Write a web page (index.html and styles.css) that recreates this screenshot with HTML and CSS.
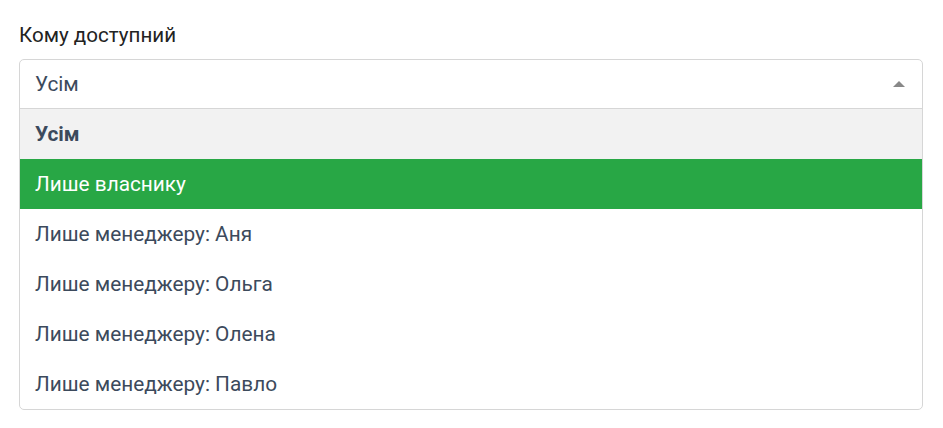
FILE: index.html
```html
<!DOCTYPE html>
<html lang="uk">
<head>
<meta charset="utf-8">
<link rel="stylesheet" href="styles.css">
</head>
<body>
<div class="field">
  <label class="label">Кому доступний</label>
  <div class="select">
    <div class="select-head">
      <span class="value">Усім</span>
      <span class="arrow"></span>
    </div>
    <ul class="options">
      <li class="option option-selected">Усім</li>
      <li class="option option-active">Лише власнику</li>
      <li class="option">Лише менеджеру: Аня</li>
      <li class="option">Лише менеджеру: Ольга</li>
      <li class="option">Лише менеджеру: Олена</li>
      <li class="option">Лише менеджеру: Павло</li>
    </ul>
  </div>
</div>
</body>
</html>
```
FILE: styles.css
```css
* { box-sizing: border-box; }
html, body { margin: 0; padding: 0; background: #fff; }
body {
  font-family: Roboto, "Noto Sans", Arial, sans-serif;
  font-size: 20.8px;
  color: #3c4a5c;
}
.field {
  padding: 22px 20px 0 19px;
}
.label {
  display: block;
  color: #222;
  font-size: 20.6px;
  line-height: 26px;
  margin-bottom: 11px;
}
.select {
  border: 1px solid #d6d6d6;
  border-radius: 5px;
  overflow: hidden;
}
.select-head {
  height: 49px;
  display: flex;
  align-items: center;
  justify-content: space-between;
  padding: 0 17px 0 15px;
  border-bottom: 1px solid #d6d6d6;
}
.value { color: #3c4a5c; }
.arrow {
  width: 0; height: 0;
  border-left: 6px solid transparent;
  border-right: 6px solid transparent;
  border-bottom: 6px solid #888;
}
.options { list-style: none; margin: 0; padding: 0; }
.option {
  height: 50px;
  line-height: 50px;
  padding: 0 15px;
  color: #3c4a5c;
}
.option-selected { background: #f2f2f2; font-weight: 700; }
.option-active { background: #28a745; color: #fff; }
```
